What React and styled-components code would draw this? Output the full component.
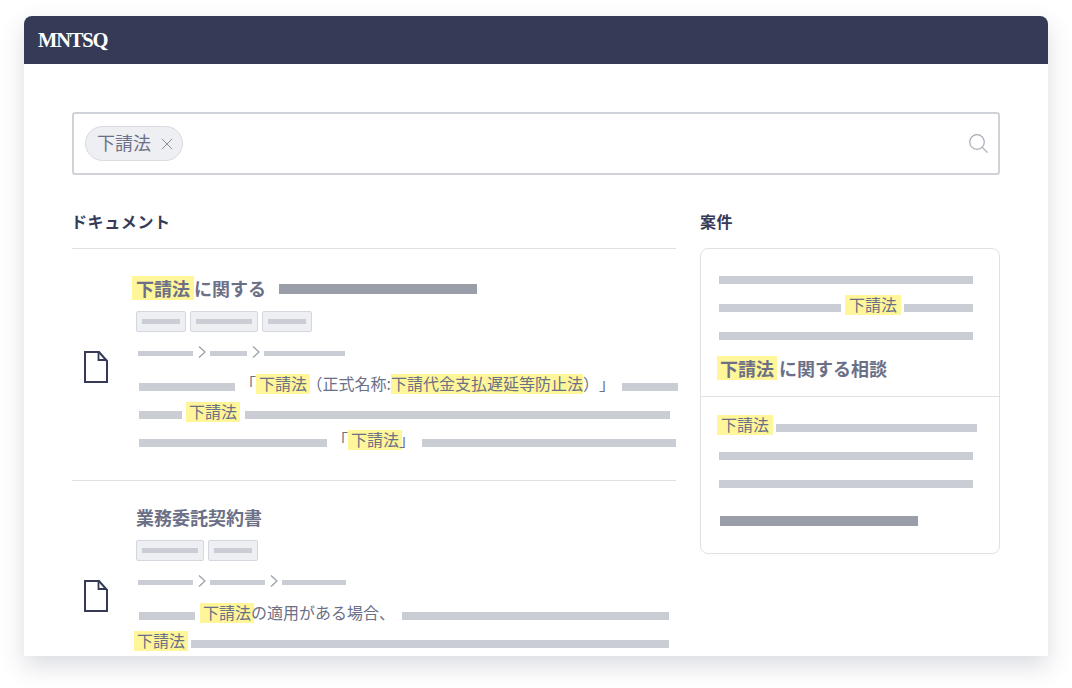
import React from 'react'
import styled, { createGlobalStyle } from 'styled-components'

const GlobalStyle = createGlobalStyle`
  html, body {
    margin: 0;
    padding: 0;
    background: #fff;
    overflow: hidden;
  }
  body {
    font-family: "Noto Sans CJK JP", "Noto Sans", sans-serif;
    color: #6b7086;
    text-spacing-trim: space-all;
  }
`

const Page = styled.div`
  padding: 16px 24px 32px;
`
const Window = styled.div`
  height: 640px;
  background: #fff;
  border-radius: 8px 8px 0 0;
  overflow: hidden;
  box-shadow: 0 10px 24px rgba(53, 59, 87, 0.18);
`
const Header = styled.header`
  height: 48px;
  background: #353b57;
  display: flex;
  align-items: center;
  padding-left: 14px;
`
const Logo = styled.div`
  font-family: "Liberation Serif", serif;
  font-weight: 700;
  font-size: 20.5px;
  color: #fff;
  letter-spacing: -1.2px;
`
const Content = styled.main`
  padding: 48px 48px 0;
`
const SearchBox = styled.div`
  height: 63px;
  box-sizing: border-box;
  border: 2px solid #d0d2d9;
  border-radius: 3px;
  display: flex;
  align-items: center;
  justify-content: space-between;
  padding: 0 10px 0 11px;
`
const Chip = styled.div`
  height: 35px;
  box-sizing: border-box;
  width: 98px;
  border: 1px solid #d9dbe1;
  border-radius: 18px;
  background: #eeeff2;
  display: flex;
  align-items: center;
  gap: 10px;
  padding-left: 11px;
  font-size: 18px;
`
const ChipLabel = styled.span`
  margin-top: -4px;
`
const Columns = styled.div`
  display: grid;
  grid-template-columns: 604px 300px;
  gap: 24px;
  margin-top: 31px;
`
const SectionTitle = styled.h2`
  margin: 0 0 0 ${(p) => p.$ml || 0}px;
  height: 42px;
  padding-top: 3px;
  box-sizing: border-box;
  font-size: 16px;
  line-height: 24px;
  font-weight: 700;
  letter-spacing: 0.6px;
  color: #353b57;
`
const DocItem = styled.article`
  border-top: 1px solid #e0e1e6;
  height: 232px;
  box-sizing: border-box;
  display: flex;
  padding-top: ${(p) => p.$top}px;
`
const DocIconCell = styled.div`
  width: 64px;
  flex: none;
  padding: 76px 0 0 12px;
  box-sizing: border-box;
`
const DocMain = styled.div`
  min-width: 0;
  flex: 1;
`
const TitleRow = styled.div`
  height: 26px;
  display: flex;
  align-items: center;
  font-size: 18px;
  font-weight: 700;
  white-space: nowrap;
`
const Mark = styled.span`
  background: #fff599;
  padding: ${(p) => p.$py ?? 0}px ${(p) => p.$px ?? 3}px;
  margin-left: ${(p) => p.$ml || 0}px;
  line-height: 20px;
  flex: none;
`
const Bar = styled.i`
  display: block;
  flex: none;
  width: ${(p) => p.$w}px;
  height: ${(p) => p.$h || 8}px;
  margin-left: ${(p) => p.$ml || 0}px;
  margin-top: ${(p) => p.$mt || 0}px;
  background: ${(p) => (p.$dark ? '#9a9ea9' : '#cacdd3')};
`
const TagRow = styled.div`
  display: flex;
  gap: 4px;
  margin-top: 10px;
`
const Tag = styled.div`
  height: 21px;
  box-sizing: border-box;
  padding: 0 5px;
  border: 1px solid #d5d7de;
  border-radius: 2px;
  background: #eeeff2;
  display: flex;
  align-items: center;
`
const Crumbs = styled.div`
  display: flex;
  align-items: center;
  height: 12px;
  margin: 14px 0 0 2px;
  ${Bar} {
    margin-top: 2px;
  }
`
const Chevron = styled.svg`
  flex: none;
  width: 8px;
  height: 12px;
  margin: 0 4px 0 5px;
`
const Snippet = styled.div`
  margin: 12px 0 0 -7px;
`
const Plain = styled.span`
  margin-left: ${(p) => p.$ml || 0}px;
  flex: none;
`
const Line = styled.div`
  height: 28px;
  display: flex;
  align-items: center;
  font-size: 16px;
  white-space: nowrap;
  padding-left: ${(p) => p.$pad || 0}px;
  ${Bar} {
    margin-top: 6px;
  }
  ${Mark} {
    line-height: 18px;
    padding-bottom: 2px;
  }
  ${Plain} {
    margin-top: -2px;
  }
`
const Card = styled.section`
  border: 1px solid #e0e1e6;
  border-radius: 8px;
  height: 306px;
  box-sizing: border-box;
`
const CardTop = styled.div`
  padding: 14px 0 0 16px;
  height: 148px;
  box-sizing: border-box;
  border-bottom: 1px solid #e0e1e6;
`
const CardBottom = styled.div`
  padding: 14px 0 0 16px;
`
const CardTitle = styled.div`
  height: 30px;
  margin-top: 6px;
  display: flex;
  align-items: center;
  font-size: 18px;
  font-weight: 700;
  white-space: nowrap;
`
const FootBar = styled.div`
  margin: 21px 0 0 3px;
`

const SearchIcon = () => (
  <svg width="19" height="19" viewBox="0 0 19 19" fill="none" stroke="#a6a9b6" strokeWidth="1.2">
    <circle cx="8" cy="8" r="7.3" />
    <path d="M13.3 13.3 L18.6 18.6" />
  </svg>
)

const CloseIcon = () => (
  <svg width="12" height="12" viewBox="0 0 12 12" fill="none" stroke="#8a8ea0" strokeWidth="1">
    <path d="M0.8 0.8 L11.2 11.2 M11.2 0.8 L0.8 11.2" />
  </svg>
)

const DocIcon = () => (
  <svg width="24" height="32" viewBox="0 0 24 32" fill="none" stroke="#353b57" strokeWidth="2">
    <path d="M1 1 H15 L23 10 V31 H1 Z" />
    <path d="M14.5 1 V9 H23" strokeWidth="1.8" />
  </svg>
)

const Arrow = () => (
  <Chevron viewBox="0 0 8 12" fill="none" stroke="#9a9ea9" strokeWidth="1.2">
    <path d="M1 0.5 L7 6 L1 11.5" />
  </Chevron>
)

const App = () => (
  <Page>
    <GlobalStyle />
    <Window>
      <Header>
        <Logo>MNTSQ</Logo>
      </Header>
      <Content>
        <SearchBox>
          <Chip>
            <ChipLabel>下請法</ChipLabel>
            <CloseIcon />
          </Chip>
          <SearchIcon />
        </SearchBox>
        <Columns>
          <div>
            <SectionTitle $ml={-1}>ドキュメント</SectionTitle>
            <DocItem $top={26}>
              <DocIconCell>
                <DocIcon />
              </DocIconCell>
              <DocMain>
                <TitleRow>
                  <Mark $px={4} $py={2} $ml={-4}>下請法</Mark>
                  に関する
                  <Bar $w={198} $h={10} $dark $ml={13} $mt={2} />
                </TitleRow>
                <TagRow>
                  <Tag><Bar $w={38} $h={5} /></Tag>
                  <Tag><Bar $w={56} $h={5} /></Tag>
                  <Tag><Bar $w={38} $h={5} /></Tag>
                </TagRow>
                <Crumbs>
                  <Bar $w={55} $h={5} />
                  <Arrow />
                  <Bar $w={37} $h={5} />
                  <Arrow />
                  <Bar $w={81} $h={5} />
                </Crumbs>
                <Snippet>
                  <Line $pad={10}>
                    <Bar $w={96} />
                    <Plain $ml={5}>「</Plain>
                    <Mark>下請法</Mark>
                    <Plain $ml={-3.5}>（正式名称:</Plain>
                    <Mark $px={0}>下請代金支払遅延等防止法</Mark>
                    <Plain>）」</Plain>
                    <Bar $w={56} $ml={7} />
                  </Line>
                  <Line $pad={10}>
                    <Bar $w={43} />
                    <Mark $ml={4}>下請法</Mark>
                    <Bar $w={425} $ml={5} />
                  </Line>
                  <Line $pad={10}>
                    <Bar $w={188} />
                    <Plain $ml={5}>「</Plain>
                    <Mark>下請法</Mark>
                    <Plain $ml={-3}>」</Plain>
                    <Bar $w={254} $ml={7} />
                  </Line>
                </Snippet>
              </DocMain>
            </DocItem>
            <DocItem $top={23}>
              <DocIconCell>
                <DocIcon />
              </DocIconCell>
              <DocMain>
                <TitleRow>業務委託契約書</TitleRow>
                <TagRow>
                  <Tag><Bar $w={56} $h={5} /></Tag>
                  <Tag><Bar $w={38} $h={5} /></Tag>
                </TagRow>
                <Crumbs>
                  <Bar $w={55} $h={5} />
                  <Arrow />
                  <Bar $w={55} $h={5} />
                  <Arrow />
                  <Bar $w={64} $h={5} />
                </Crumbs>
                <Snippet>
                  <Line $pad={10}>
                    <Bar $w={56} />
                    <Mark $ml={5}>下請法</Mark>
                    <Plain $ml={-3}>の適用がある場合、</Plain>
                    <Bar $w={267} $ml={7} />
                  </Line>
                  <Line $pad={5}>
                    <Mark>下請法</Mark>
                    <Bar $w={478} $ml={3} />
                  </Line>
                </Snippet>
              </DocMain>
            </DocItem>
          </div>
          <div>
            <SectionTitle>案件</SectionTitle>
            <Card>
              <CardTop>
                <Line $pad={2}>
                  <Bar $w={254} />
                </Line>
                <Line $pad={2}>
                  <Bar $w={122} />
                  <Mark $px={4} $ml={4}>下請法</Mark>
                  <Bar $w={69} $ml={3} />
                </Line>
                <Line $pad={2}>
                  <Bar $w={254} />
                </Line>
                <CardTitle>
                  <Mark $py={2}>下請法</Mark>
                  <Plain $ml={2}>に関する相談</Plain>
                </CardTitle>
              </CardTop>
              <CardBottom>
                <Line>
                  <Mark $px={4}>下請法</Mark>
                  <Bar $w={201} $ml={3} />
                </Line>
                <Line $pad={2}>
                  <Bar $w={254} />
                </Line>
                <Line $pad={2}>
                  <Bar $w={254} />
                </Line>
                <FootBar>
                  <Bar $w={198} $h={10} $dark />
                </FootBar>
              </CardBottom>
            </Card>
          </div>
        </Columns>
      </Content>
    </Window>
  </Page>
)

export default App
